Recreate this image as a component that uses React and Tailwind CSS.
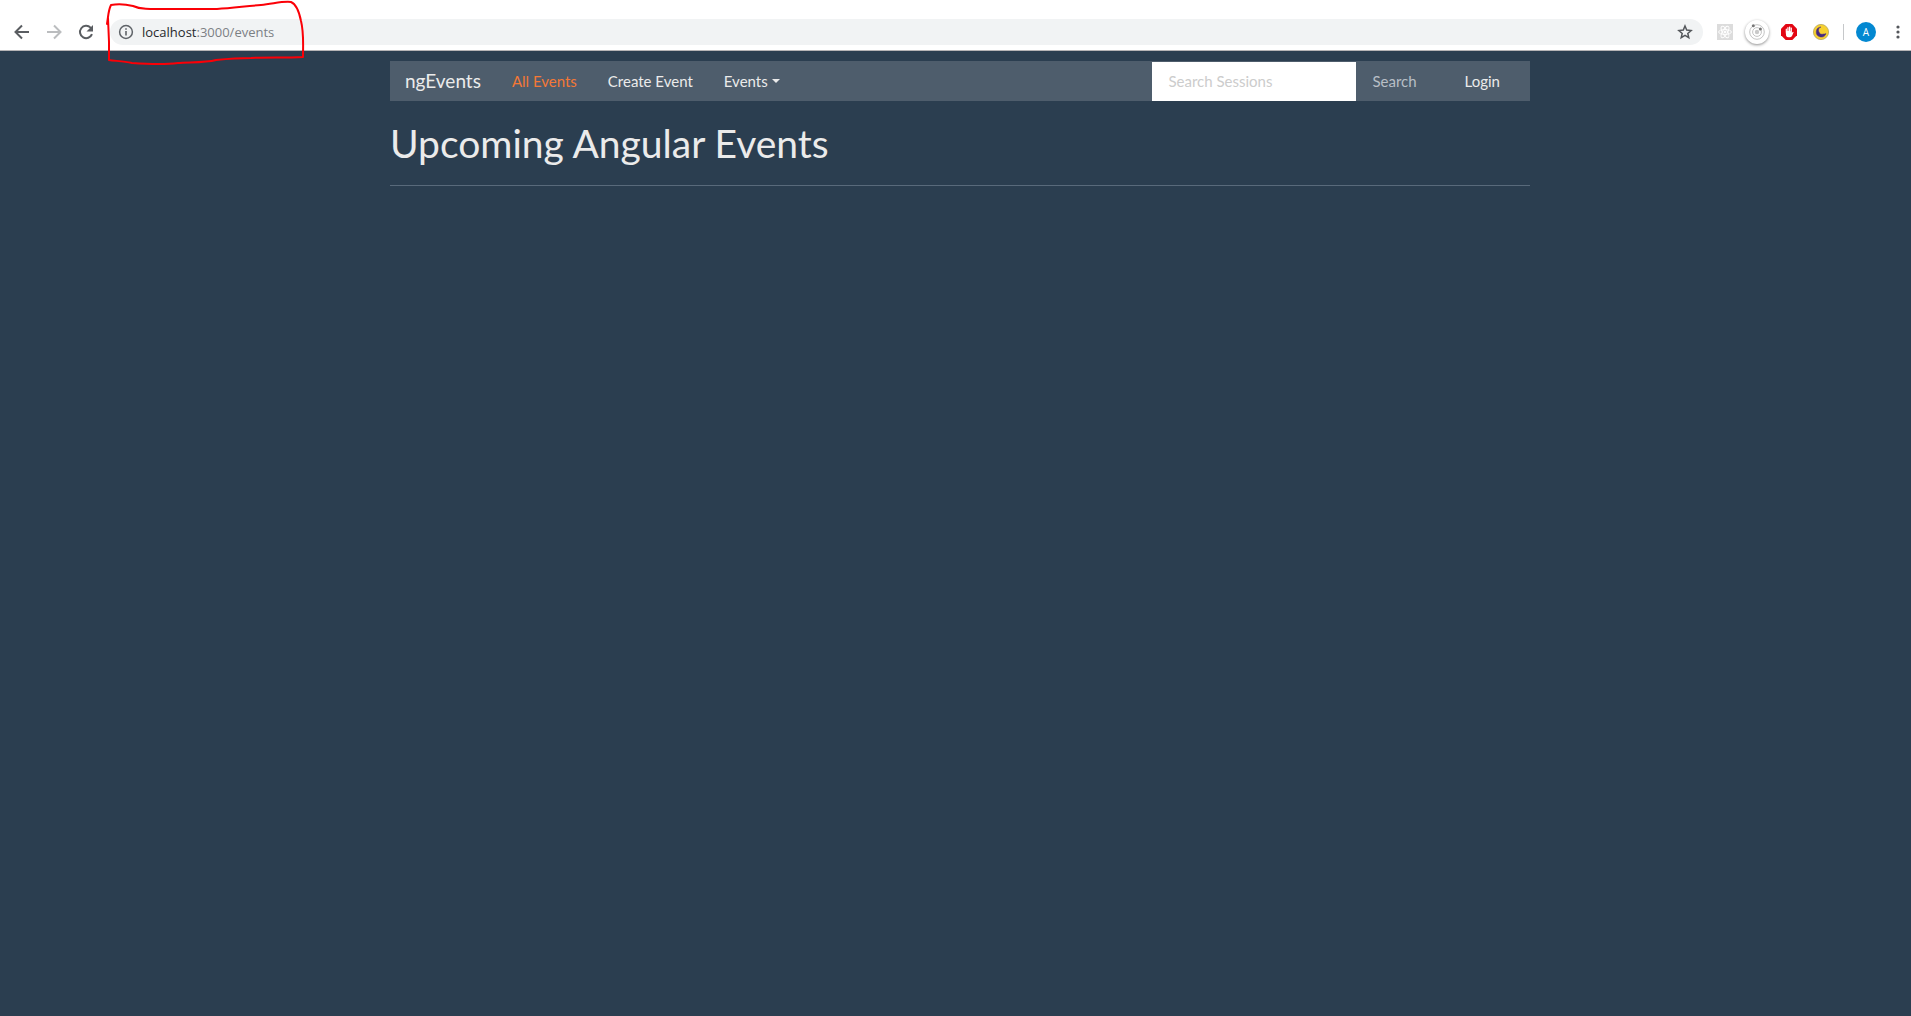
const iconButton = "flex size-8 shrink-0 items-center justify-center";

function Toolbar() {
  return (
    <header className="relative flex h-[51px] items-center border-b border-[#b6b4b6] bg-white pt-[14px] font-['Open_Sans',sans-serif]">
      <div className="flex w-[110px] shrink-0 items-center pl-[6px]">
        <button aria-label="Back" className={iconButton}>
          <svg width="20" height="20" viewBox="0 0 20 20" fill="none" stroke="#5a5d61" strokeWidth="2">
            <path d="M17 10H4M10 3.5 3.5 10l6.5 6.5" />
          </svg>
        </button>
        <button aria-label="Forward" className={iconButton}>
          <svg width="20" height="20" viewBox="0 0 20 20" fill="none" stroke="#bbbdbf" strokeWidth="2">
            <path d="M3 10h13M10 3.5l6.5 6.5-6.5 6.5" />
          </svg>
        </button>
        <button aria-label="Reload" className={iconButton}>
          <svg width="20" height="20" viewBox="0 0 20 20" fill="none">
            <path d="M16 12.2a6.2 6.2 0 1 1-1.4-6.6L16 7" stroke="#5a5d61" strokeWidth="2" />
            <path d="M17 3v6.5h-6.5z" fill="#5a5d61" />
          </svg>
        </button>
      </div>

      <div className="flex h-[26px] min-w-0 flex-1 items-center rounded-full bg-[#f1f3f4] pl-[8px] pr-[10px]">
        <svg width="16" height="16" viewBox="0 0 16 16" fill="none" stroke="#5f6368" strokeWidth="1.5" className="shrink-0">
          <circle cx="8" cy="8" r="6.4" />
          <path d="M8 7v4.6M8 4.2v1.6" strokeWidth="1.6" />
        </svg>
        <a href="#events" className="ml-[8px] text-[13px] leading-[18px] text-[#7c8084]">
          <span className="text-[#27292c]">localhost</span>:3000/events
        </a>
        <button aria-label="Bookmark this page" className="ml-auto flex size-4 items-center justify-center">
          <svg width="16" height="16" viewBox="0 0 16 16" fill="none" stroke="#54575b" strokeWidth="1.5" className="shrink-0">
            <path d="m8 2 1.7 4.1 4.4.4-3.3 2.9 1 4.3L8 11.4l-3.8 2.3 1-4.3-3.3-2.9 4.4-.4z" />
          </svg>
        </button>
      </div>

      <div className="flex w-[208px] shrink-0 items-center pl-[6px]">
        <button aria-label="React tools" className={iconButton}>
          <svg width="16" height="16" viewBox="0 0 16 16" fill="none" stroke="#fff" strokeWidth="0.9">
            <rect width="16" height="16" fill="#dcdcdc" stroke="none" />
            <ellipse cx="8" cy="8" rx="6.4" ry="2.5" />
            <ellipse cx="8" cy="8" rx="6.4" ry="2.5" transform="rotate(60 8 8)" />
            <ellipse cx="8" cy="8" rx="6.4" ry="2.5" transform="rotate(120 8 8)" />
            <circle cx="8" cy="8" r="1" fill="#fff" />
          </svg>
        </button>
        <button aria-label="Orbit extension" className={iconButton}>
          <span className="flex size-6 items-center justify-center rounded-full bg-white shadow-[0_1px_3px_rgba(0,0,0,0.45)]">
            <svg width="18" height="18" viewBox="0 0 18 18" fill="none" stroke="#c4c4c4">
              <circle cx="9" cy="9" r="7.3" strokeWidth="1" />
              <circle cx="9" cy="9" r="4.4" strokeWidth="1" />
              <circle cx="9" cy="9" r="2.2" fill="#c9c9c9" stroke="none" />
              <circle cx="5.3" cy="2.8" r="1.5" fill="#777" stroke="none" />
              <circle cx="12.4" cy="6" r="1.5" fill="#777" stroke="none" />
            </svg>
          </span>
        </button>
        <button aria-label="Content blocker" className={iconButton}>
          <svg width="16" height="16" viewBox="0 0 16 16">
            <path d="M4.7 0h6.6L16 4.7v6.6L11.3 16H4.7L0 11.3V4.7z" fill="#e30613" />
            <path d="M4.7 8V4.9q.6-.8 1.2 0v2.2h.4V3.4q.6-.8 1.3 0v3.5H8V2.8q.7-.8 1.3 0v4.4h.4V3.8q.6-.7 1.2 0v5.1l.7-1q.8-.3 1 .4L11 12.1q-.5 1.1-1.9 1.2H7.5q-1.8 0-2.4-1.6z" fill="#fff" />
          </svg>
        </button>
        <button aria-label="Dark mode" className={iconButton}>
          <svg width="16" height="16" viewBox="0 0 16 16">
            <circle cx="8" cy="8" r="7.6" fill="#f6d02f" stroke="#b7a75a" strokeWidth="0.8" />
            <path d="M8 3A5 5 0 1 0 13 9.6Q12 10.3 10.6 10A3.7 3.7 0 0 1 8 3z" fill="#472a80" stroke="#472a80" strokeWidth="0.5" />
          </svg>
        </button>
        <span className="ml-[6px] h-4 w-px bg-[#c6c8ca]" />
        <button aria-label="Profile" className="ml-3 flex size-5 items-center justify-center rounded-full bg-[#0388d1] text-[10px] leading-[20px] text-white">
          A
        </button>
        <button aria-label="Browser menu" className="ml-[14px] flex h-8 w-4 items-center justify-center">
          <svg width="4" height="14" viewBox="0 0 4 14" fill="#54575b">
            <circle cx="2" cy="2" r="1.6" />
            <circle cx="2" cy="7" r="1.6" />
            <circle cx="2" cy="12" r="1.6" />
          </svg>
        </button>
      </div>

      <svg
        className="pointer-events-none absolute left-[104px] top-0"
        width="204"
        height="68"
        viewBox="104 0 204 68"
        fill="none"
        stroke="#fb0007"
        strokeWidth="2"
        strokeLinecap="round"
        strokeLinejoin="round"
      >
        <path d="M107 24 108 17Q109 9 111 5 121 3 133 6C142 10 154 9 170 9H217C233 8 247 6 261 5 273 4 282 1 291 2 296 4 299 11 301 21 304 33 303 43 303 57C284 58 269 57 251 58 237 58 226 59 216 60 205 63 188 62 178 63 163 65 146 64 132 63 123 61 115 61 109 60V42L108 18" />
      </svg>
    </header>
  );
}

function NavLink({ children, active, className = "" }) {
  return (
    <a href="#nav" className={`flex h-10 items-center px-[15px] ${active ? "text-[#f47836]" : ""} ${className}`}>
      {children}
    </a>
  );
}

export default function App() {
  return (
    <div className="flex min-h-screen flex-col bg-[#2b3e50] text-[#ebebeb]">
      <Toolbar />
      <main className="pl-[9px] pt-[10px] font-[Lato,sans-serif] text-[15px] leading-[20px]">
        <div className="mx-auto w-full max-w-[1140px]">
          <nav className="flex min-h-10 flex-wrap items-center gap-x-px bg-[#4e5d6c] pr-[15px]">
            <NavLink className="text-[19px]">ngEvents</NavLink>
            <NavLink active>All Events</NavLink>
            <NavLink>Create Event</NavLink>
            <NavLink>
              Events
              <span className="ml-1 border-x-4 border-t-4 border-x-transparent border-t-[#ebebeb]" />
            </NavLink>
            <form className="ml-auto flex h-10 items-end pr-4" onSubmit={(e) => e.preventDefault()}>
              <input
                type="text"
                aria-label="Search Sessions"
                placeholder="Search Sessions"
                className="h-[39px] w-[204px] bg-white px-4 pb-[2px] text-[#2b3e50] placeholder:text-[#cccccc]"
              />
              <button type="submit" className="h-10 px-4 text-[#b8bfc6]">
                Search
              </button>
            </form>
            <NavLink>Login</NavLink>
          </nav>
          <h1 className="mt-[21px] text-[39px] leading-[43px]">Upcoming Angular Events</h1>
          <hr className="mt-[20px] border-t border-[#596a7b]" />
        </div>
      </main>
    </div>
  );
}
